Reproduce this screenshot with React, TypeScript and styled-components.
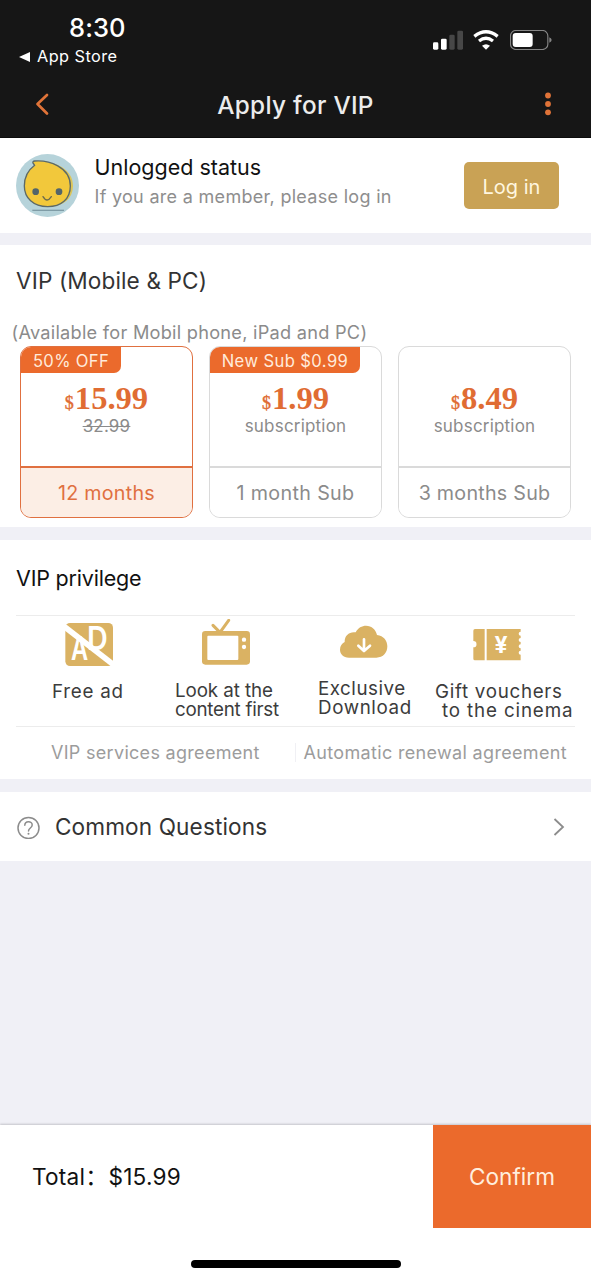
import React from "react";
import styled, { createGlobalStyle } from "styled-components";

const ORANGE = "#eb6a2c";
const GOLD = "#dab263";

const GlobalStyle = createGlobalStyle`
  * { box-sizing: border-box; }
  body { margin: 0; background: #f0f0f6; }
  p, h1, h2 { margin: 0; font-weight: 400; }
`;

const Screen = styled.div`
  width: 591px;
  height: 1280px;
  display: flex;
  flex-direction: column;
  overflow: hidden;
  background: #f0f0f6;
  font-family: Inter, "Noto Sans CJK SC", sans-serif;
  color: #333;
  white-space: nowrap;
`;

const Text = styled.span<{ $size: number; $track?: number; $color?: string; $weight?: number }>`
  font-size: ${(p) => p.$size}px;
  letter-spacing: ${(p) => p.$track ?? 0}px;
  color: ${(p) => p.$color ?? "inherit"};
  font-weight: ${(p) => p.$weight ?? 400};
`;

/* ---------- top ---------- */
const Header = styled.header`
  height: 138px;
  flex: none;
  background: #161616;
  border-bottom: 1px solid #0c0c0c;
`;

const StatusBar = styled.div`
  height: 71px;
  display: flex;
  justify-content: space-between;
  padding: 13px 40px 0 19px;
  color: #fff;
`;

const Clock = styled.div`
  height: 29px;
  padding-left: 50px;
  line-height: 29px;
`;

const BackToApp = styled.div`
  display: flex;
  align-items: center;
  gap: 6px;
  height: 29px;
  line-height: 29px;
`;

const StatusIcons = styled.div`
  display: flex;
  align-items: flex-start;
  gap: 10.5px;
  padding-top: 16.5px;
  margin-right: -0.5px;
`;

const NavBar = styled.div`
  height: 67px;
  display: grid;
  grid-template-columns: 60px 1fr 60px;
  align-items: center;
  text-align: center;
  line-height: 64px;
  padding-bottom: 1px;
`;

const NavIcon = styled.svg<{ $end?: boolean }>`
  display: block;
  justify-self: ${(p) => (p.$end ? "end" : "start")};
  margin: 0 35px;
`;

/* ---------- sections ---------- */
const Section = styled.section<{ $h: number; $gap?: number }>`
  height: ${(p) => p.$h}px;
  flex: none;
  margin-bottom: ${(p) => p.$gap ?? 0}px;
  background: #fff;
`;

const UserRow = styled(Section)`
  display: flex;
  align-items: center;
  padding: 0 32px 0 16px;
`;

const UserInfo = styled.div`
  flex: 1;
  display: flex;
  flex-direction: column;
  margin-left: 15.5px;
  line-height: 30px;
  padding-bottom: 7px;
`;

const LoginButton = styled.button`
  width: 95px;
  height: 47px;
  padding: 2px 0 0;
  border: 0;
  border-radius: 5px;
  background: #c9a255;
  color: #fff6df;
  font-family: inherit;
`;

const SectionTitle = styled.h2<{ $h: number }>`
  height: ${(p) => p.$h}px;
  line-height: ${(p) => p.$h}px;
  padding-left: 16px;
`;

const PlanNote = styled.p`
  padding-left: 11.5px;
  height: 29px;
  line-height: 31px;
`;

const Plans = styled.div`
  display: flex;
  gap: 16px;
  padding: 0 20px;
`;

const PlanCard = styled.article<{ $active?: boolean }>`
  --line: ${(p) => (p.$active ? "#e07040" : "#dadada")};
  position: relative;
  width: 173px;
  height: 172px;
  display: flex;
  flex-direction: column;
  align-items: stretch;
  text-align: center;
  border: 1.5px solid var(--line);
  border-radius: 11px;
  overflow: hidden;
  color: #8b8b8b;
`;

const PlanBadge = styled.span<{ $w: number }>`
  position: absolute;
  left: 0;
  top: 0;
  width: ${(p) => p.$w}px;
  height: 26px;
  line-height: 28px;
  border-bottom-right-radius: 7px;
  background: ${ORANGE};
  color: #ffeadb;
`;

const PlanBody = styled.div`
  flex: 1;
  padding-top: 34px;
`;

const Price = styled.div`
  font-family: "Liberation Serif", serif;
  font-weight: 700;
  font-size: 32.6px;
  height: 35px;
  line-height: 34px;
  color: #e06c33;
  small { font-size: 18px; font-weight: 400; margin-right: 1px; -webkit-text-stroke: 0.4px #e06c33; }
`;

const PlanSub = styled.div<{ $struck?: boolean }>`
  font-size: 17px;
  height: 20px;
  line-height: 20px;
  text-decoration: ${(p) => (p.$struck ? "line-through" : "none")};
`;

const PlanTerm = styled.div<{ $active?: boolean }>`
  height: 51px;
  line-height: 50px;
  border-top: 2px solid var(--line);
  background: ${(p) => (p.$active ? "#fceee5" : "#fff")};
  color: ${(p) => (p.$active ? "#e07040" : "#8b8b8b")};
`;

/* ---------- privileges ---------- */
const Privileges = styled.div`
  margin: 0 16px;
  height: 112px;
  display: grid;
  grid-template-columns: 123px 143px 117px 1fr;
  padding-left: 36px;
  border-top: 1px solid #ececec;
  border-bottom: 1px solid #ececec;
`;

const Privilege = styled.div<{ $indent: number; $drop: number }>`
  svg { display: block; margin: 3px 0 0 ${(p) => p.$indent}px; }
  p { padding-top: ${(p) => p.$drop}px; line-height: 19px; color: #3c3c3c; }
`;

const PrivilegeLine = styled(Text)<{ $shift?: number }>`
  display: block;
  height: 19px;
  margin-left: ${(p) => p.$shift ?? 0}px;
`;

const Agreements = styled.div`
  display: flex;
  align-items: center;
  height: 50px;
  padding: 0 24px 0 51px;
  justify-content: space-between;
`;

const Divider = styled.i`
  width: 1.5px;
  height: 19px;
  margin-left: 28px;
  background: #f0f0f4;
`;

const QuestionRow = styled(Section)`
  display: flex;
  align-items: center;
  padding: 0 26px 0 17px;
  span { flex: 1; margin-left: 15px; }
`;

/* ---------- footer ---------- */
const Footer = styled.footer`
  height: 155px;
  margin-top: auto;
  display: flex;
  flex-direction: column;
  align-items: center;
  background: #fff;
  box-shadow: 0 -1px 2px rgba(0, 0, 0, 0.18);
`;

const PayBar = styled.div`
  width: 100%;
  height: 103px;
  display: flex;
  justify-content: space-between;
  line-height: 103px;
  padding-left: 32px;
  color: #111;
`;

const Amount = styled.span`
  margin-left: 0.5px;
`;

const ConfirmButton = styled.button`
  width: 158px;
  height: 103px;
  padding: 0;
  border: 0;
  background: ${ORANGE};
  color: #ffeedd;
  font-family: inherit;
`;

const HomeIndicator = styled.div`
  width: 210px;
  height: 8px;
  margin-top: 32px;
  border-radius: 4px;
  background: #000;
`;

/* ---------- drawings ---------- */
const Avatar = () => (
  <svg width="63" height="63" viewBox="48 42 189 189">
    <circle cx="142.500" cy="136.500" r="94.500" fill="#b6d3da" />
    <path d="M110 78L106 66C148 60 220 78 219 138C218 178 190 198 150 199C108 198 82 172 81 138C81 112 92 92 110 78Z" fill="#dcc558" />
    <path d="M104 76L99 69Q97 64 104 63C146 60 211 80 211 138C211 178 183 200 143 200C100 200 73 174 73 138C73 110 85 90 104 76Z" fill="#f2c83b" stroke="#5c6a68" strokeWidth="4" strokeLinejoin="round" />
    <circle cx="107" cy="155" r="10" fill="#53656a" />
    <circle cx="177" cy="155" r="10" fill="#53656a" />
    <path d="M129 170Q141 190 154 170" fill="none" stroke="#6a6a4c" strokeWidth="4" strokeLinecap="round" />
    <path d="M97 211H192" stroke="#7f9ca6" strokeWidth="4" />
  </svg>
);

const AdIcon = () => (
  <svg width="49" height="48" viewBox="197 57 147 144">
    <rect x="198" y="69" width="143" height="129" rx="14" fill={GOLD} />
    <g fill="#fff" fontFamily="Inter" fontWeight="600" fontSize="98">
      <text transform="translate(215 180) scale(.72 1)">A</text>
      <text transform="translate(263 151) scale(.88 1)">D</text>
    </g>
    <path d="M190 76L345 196" stroke="#fff" strokeWidth="17" />
  </svg>
);

const TvIcon = () => (
  <svg width="48" height="48" viewBox="606 57 144 144">
    <path d="M639 76L660 97L686 61" fill="none" stroke={GOLD} strokeWidth="9" strokeLinecap="round" />
    <rect x="606" y="93" width="144" height="101" rx="10" fill={GOLD} />
    <rect x="622" y="107" width="93" height="73" rx="3" fill="#fff" />
    <circle cx="732" cy="119" r="6.500" fill="#fff" />
    <circle cx="732" cy="141" r="6.500" fill="#fff" />
  </svg>
);

const CloudIcon = () => (
  <svg width="48" height="48" viewBox="149 57 144 144">
    <path d="M176 173C158 173 149 161 149 149C149 138 155 130 163 126C162 106 178 94 196 97C203 83 215 77 227 77C244 77 257 89 260 105C280 107 291 122 291 139C291 158 279 173 258 173Z" fill={GOLD} />
    <path d="M221 118V152M204 137L221 153L239 137" fill="none" stroke="#fff" strokeWidth="8" strokeLinecap="round" strokeLinejoin="round" />
  </svg>
);

const TicketIcon = () => (
  <svg width="48" height="48" viewBox="548 57 144 144">
    <path d="M554 87H583V181H554Q549 181 549 176V142A9 9 0 0 0 549 123V92Q549 87 554 87Z" fill={GOLD} />
    <path d="M589 87H691V95A6 6 0 0 0 691 107V114A6 6 0 0 0 691 126V133A6 6 0 0 0 691 145V152A6 6 0 0 0 691 164V181H589Z" fill={GOLD} />
    <text x="632" y="159" fill="#fff" fontFamily="Inter" fontWeight="700" fontSize="69" textAnchor="middle">¥</text>
  </svg>
);

const SignalIcon = () => (
  <svg width="30" height="20" viewBox="96 88 90 60">
    <rect x="96" y="125" width="16" height="22" rx="4" fill="#fff" />
    <rect x="120" y="114" width="17" height="33" rx="4" fill="#fff" />
    <rect x="145" y="102" width="16" height="45" rx="4" fill="#474747" />
    <rect x="169" y="90" width="17" height="57" rx="4" fill="#474747" />
  </svg>
);

const WifiIcon = () => (
  <svg width="26" height="20" viewBox="218 88 78 60">
    <path d="M222 107Q257 80 292 107M236 121Q257 105 278 121" fill="none" stroke="#fff" strokeWidth="10" />
    <path d="M257 147L245 135Q257 126 269 135Z" fill="#fff" />
  </svg>
);

const BatteryIcon = () => (
  <svg width="42" height="20" viewBox="328 88 126 60">
    <rect x="329.500" y="89.500" width="112" height="57" rx="16" fill="none" stroke="#858585" strokeWidth="3.500" />
    <rect x="336" y="97" width="60" height="42" rx="9" fill="#fff" />
    <path d="M446 110Q453 113 453 118Q453 123 446 126Z" fill="#858585" />
  </svg>
);

const plans = [
  { badge: "50% OFF", badgeW: 100, badgeTrack: 0.35, price: "15.99", sub: "32.99", subTrack: 0.2, struck: true, term: "12 months", termTrack: 0.25, active: true },
  { badge: "New Sub $0.99", badgeW: 150, badgeTrack: 0.4, price: "1.99", sub: "subscription", subTrack: 0.2, term: "1 month Sub", termTrack: 0.35 },
  { price: "8.49", sub: "subscription", subTrack: 0.2, term: "3 months Sub", termTrack: 0.25 },
];

interface Line { t: string; track: number; shift?: number }

const privileges: { icon: React.ReactNode; indent: number; drop: number; lines: Line[] }[] = [
  { icon: <AdIcon />, indent: 13, drop: 15, lines: [{ t: "Free ad", track: 0.75 }] },
  { icon: <TvIcon />, indent: 27, drop: 13.5, lines: [{ t: "Look at the", track: -0.1 }, { t: "content first", track: -0.25 }] },
  { icon: <CloudIcon />, indent: 22, drop: 12, lines: [{ t: "Exclusive", track: 0.5 }, { t: "Download", track: 0.6 }] },
  { icon: <TicketIcon />, indent: 38, drop: 15, lines: [{ t: "Gift vouchers", track: 0.7 }, { t: "to the cinema", track: 0.85, shift: 7 }] },
];

export default function App() {
  return (
    <Screen>
      <GlobalStyle />
      <Header>
        <StatusBar>
          <div>
            <Clock><Text $size={25.5} $weight={500} $track={0.1}>8:30</Text></Clock>
            <BackToApp>
              <svg width="12" height="10" viewBox="0 0 12 10"><path d="M0 5L11 0V10Z" fill="#fff" /></svg>
              <Text $size={16.3} $track={0.45}>App Store</Text>
            </BackToApp>
          </div>
          <StatusIcons><SignalIcon /><WifiIcon /><BatteryIcon /></StatusIcons>
        </StatusBar>
        <NavBar>
          <NavIcon width="14" height="24" viewBox="0 0 14 24">
            <path d="M12 3L2.500 12L12 21.500" fill="none" stroke="#e07338" strokeWidth="2.700" strokeLinecap="round" strokeLinejoin="round" />
          </NavIcon>
          <h1><Text $size={24.3} $weight={500} $track={0.3} $color="#ececec">Apply for VIP</Text></h1>
          <NavIcon $end width="16" height="24" viewBox="0 0 16 24" fill="#e07338">
            <circle cx="8" cy="3.500" r="2.900" /><circle cx="8" cy="12" r="2.900" /><circle cx="8" cy="20.300" r="2.900" />
          </NavIcon>
        </NavBar>
      </Header>

      <UserRow $h={95} $gap={12}>
        <Avatar />
        <UserInfo>
          <Text $size={21.5} $color="#111">Unlogged status</Text>
          <Text $size={18} $color="#8e8e8e" $track={0.3}>If you are a member, please log in</Text>
        </UserInfo>
        <LoginButton><Text $size={20}>Log in</Text></LoginButton>
      </UserRow>

      <Section $h={282} $gap={13}>
        <SectionTitle $h={72}><Text $size={22.6} $track={0.12}>VIP (Mobile &amp; PC)</Text></SectionTitle>
        <PlanNote><Text $size={18.2} $color="#8b8b8b" $track={0.25}>(Available for Mobil phone, iPad and PC)</Text></PlanNote>
        <Plans>
          {plans.map((p) => (
            <PlanCard key={p.term} $active={p.active}>
              {p.badge && <PlanBadge $w={p.badgeW!}><Text $size={16.6} $track={p.badgeTrack}>{p.badge}</Text></PlanBadge>}
              <PlanBody>
                <Price><small>$</small>{p.price}</Price>
                <PlanSub $struck={p.struck}><Text $size={17} $track={p.subTrack}>{p.sub}</Text></PlanSub>
              </PlanBody>
              <PlanTerm $active={p.active}><Text $size={19.7} $track={p.termTrack}>{p.term}</Text></PlanTerm>
            </PlanCard>
          ))}
        </Plans>
      </Section>

      <Section $h={239} $gap={13}>
        <SectionTitle $h={75}><Text $size={21.5} $track={-0.2} $color="#111">VIP privilege</Text></SectionTitle>
        <Privileges>
          {privileges.map((v) => (
            <Privilege key={v.lines[0].t} $indent={v.indent} $drop={v.drop}>
              {v.icon}
              <p>
                {v.lines.map((l) => (
                  <PrivilegeLine key={l.t} $size={18.8} $track={l.track} $shift={l.shift}>{l.t}</PrivilegeLine>
                ))}
              </p>
            </Privilege>
          ))}
        </Privileges>
        <Agreements>
          <Text $size={18} $color="#9c9c9c" $track={0.3}>VIP services agreement</Text>
          <Divider />
          <Text $size={18} $color="#9c9c9c" $track={0.33}>Automatic renewal agreement</Text>
        </Agreements>
      </Section>

      <QuestionRow $h={69}>
        <svg width="23" height="24" viewBox="0 0 23 24" fill="none" stroke="#8c8c8c" strokeWidth="1.500">
          <circle cx="11.500" cy="13" r="10.500" />
          <path d="M7.800 10.300C7.800 5.500 15.200 5.500 15.200 10C15.200 13 11.500 13 11.500 16" strokeLinecap="round" />
          <circle cx="11.500" cy="18.800" r="1" fill="#8c8c8c" stroke="none" />
        </svg>
        <Text $size={22.6} $track={0.12}>Common Questions</Text>
        <svg width="12" height="20" viewBox="0 0 12 20"><path d="M1.500 2L10 10L1.500 18" fill="none" stroke="#8c8c8c" strokeWidth="1.800" /></svg>
      </QuestionRow>

      <Footer>
        <PayBar>
          <Text $size={22.6} $track={0.22}>Total：<Amount>$15.99</Amount></Text>
          <ConfirmButton><Text $size={22.6}>Confirm</Text></ConfirmButton>
        </PayBar>
        <HomeIndicator />
      </Footer>
    </Screen>
  );
}
